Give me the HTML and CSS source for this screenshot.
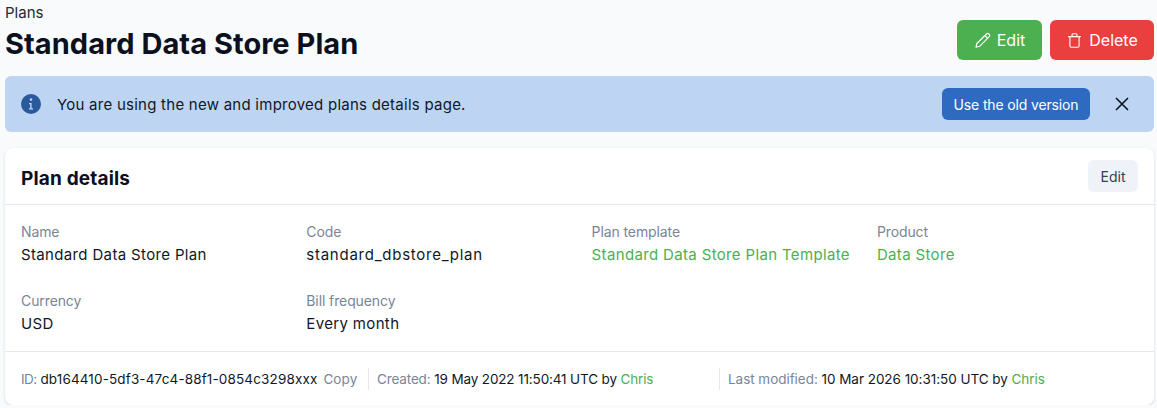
FILE: index.html
```html
<!DOCTYPE html>
<html lang="en">
<head>
<meta charset="utf-8">
<title>Standard Data Store Plan</title>
<link rel="stylesheet" href="styles.css">
</head>
<body>
<div class="page">
  <header class="top">
    <div class="titles">
      <div class="crumb">Plans</div>
      <h1>Standard Data Store Plan</h1>
    </div>
    <div class="actions">
      <button class="btn btn-green">
        <svg class="btn-icon" viewBox="0 0 24 24" fill="none" stroke="currentColor" stroke-width="1.6" stroke-linecap="round" stroke-linejoin="round"><path d="M17.6 2.8a2.7 2.7 0 0 1 3.8 3.8L8 20.2 2.8 21.4 4 16.2Z"/><path d="M15.4 5l3.8 3.8"/></svg>
        Edit
      </button>
      <button class="btn btn-red">
        <svg class="btn-icon" viewBox="0 0 24 24" fill="none" stroke="currentColor" stroke-width="1.6" stroke-linecap="round" stroke-linejoin="round"><path d="M3.5 6.5h17"/><path d="M8.5 6.5V4a1.5 1.5 0 0 1 1.5-1.5h4A1.5 1.5 0 0 1 15.500 4v2.500"/><path d="M5.500 6.500V19.500a2 2 0 0 0 2 2h9a2 2 0 0 0 2-2V6.500"/></svg>
        Delete
      </button>
    </div>
  </header>

  <div class="alert">
    <svg class="alert-icon" viewBox="0 0 20 20"><circle cx="10" cy="10" r="10" fill="#2a5a9c"/><circle cx="10" cy="5.6" r="1.3" fill="#bdd5f2"/><path d="M8 9h2.6v5.2H12v1.2H8v-1.2h1.2v-4H8z" fill="#bdd5f2"/></svg>
    <span class="alert-text">You are using the new and improved plans details page.</span>
    <button class="btn-old">Use the old version</button>
    <svg class="alert-close" viewBox="0 0 14 14" fill="none" stroke="#101828" stroke-width="1.7" stroke-linecap="round"><path d="M1.5 1.5l11 11M12.5 1.5l-11 11"/></svg>
  </div>

  <section class="card">
    <div class="card-head">
      <h2>Plan details</h2>
      <button class="btn-soft">Edit</button>
    </div>
    <div class="fields">
      <div class="field"><div class="label">Name</div><div class="value">Standard Data Store Plan</div></div>
      <div class="field"><div class="label">Code</div><div class="value value-code">standard_dbstore_plan</div></div>
      <div class="field"><div class="label">Plan template</div><div class="value link">Standard Data Store Plan Template</div></div>
      <div class="field"><div class="label">Product</div><div class="value link">Data Store</div></div>
      <div class="field"><div class="label">Currency</div><div class="value">USD</div></div>
      <div class="field"><div class="label">Bill frequency</div><div class="value">Every month</div></div>
    </div>
    <div class="card-foot">
      <div class="meta meta-id"><span class="muted id-label">ID:</span> db164410-5df3-47c4-88f1-0854c3298xxx <span class="muted copy">Copy</span></div>
      <div class="meta meta-created"><span class="muted">Created:</span> 19 May 2022 11:50:41 UTC by <span class="link">Chris</span></div>
      <div class="meta meta-modified"><span class="muted">Last modified:</span> 10 Mar 2026 10:31:50 UTC by <span class="link">Chris</span></div>
    </div>
  </section>
</div>
</body>
</html>
```
FILE: styles.css
```css
* { box-sizing: border-box; }
html, body { margin: 0; padding: 0; }
body {
  background: #f9fafc;
  color: #101828;
  font-family: "Inter", "Noto Sans", sans-serif;
  font-size: 15px;
  overflow: hidden;
}
button { font-family: inherit; border: 0; cursor: pointer; }
.page { padding: 0 3px 0 5px; }
.top { display: flex; justify-content: space-between; align-items: flex-start; height: 76px; }
.crumb { font-size: 15px; line-height: 20px; padding-top: 3px; color: #1d2939; }
h1 { margin: 3px 0 0; font-size: 29px; line-height: 36px; font-weight: 700; letter-spacing: .05px; color: #0a1020; }
.actions { display: flex; gap: 8px; padding-top: 20px; }
.btn {
  display: flex; align-items: center; justify-content: center; gap: 6px;
  height: 40px; border-radius: 6px; color: #fff; font-size: 16px; padding: 0 16px;
}
.btn-green { background: #4caf50; width: 85px; }
.btn-red { background: #ea3f3f; width: 104px; }
.btn-icon { width: 17px; height: 17px; flex: none; }
.alert {
  display: flex; align-items: center; height: 56px; background: #bdd5f2;
  border-radius: 6px; padding: 0 25px 0 16px;
}
.alert-icon { width: 20px; height: 20px; flex: none; }
.alert-text { margin-left: 16px; flex: 1; font-size: 15px; letter-spacing: .25px; }
.btn-old { height: 32px; width: 148px; padding: 0; border-radius: 6px; background: #2e6abf; color: #fff; font-size: 14px; letter-spacing: -.15px; }
.alert-close { width: 14px; height: 14px; margin-left: 25px; flex: none; }
.card {
  margin-top: 16px; height: 257px; background: #fff; border-radius: 8px;
  box-shadow: 0 1px 3px rgba(16, 24, 40, .14);
}
.card-head {
  display: flex; justify-content: space-between; align-items: center;
  height: 57px; padding: 0 16px; border-bottom: 1px solid #e4e8ef;
}
h2 { margin: 4px 0 0; font-size: 19px; font-weight: 700; letter-spacing: .17px; color: #0a1020; }
.btn-soft { height: 32px; width: 50px; border-radius: 6px; background: #eff2f7; color: #344054; font-size: 14px; }
.fields {
  display: grid; grid-template-columns: repeat(4, 285.3px); grid-auto-rows: 69px;
  height: 146px; padding: 16px 16px 0;
}
.label { font-size: 14px; line-height: 22px; letter-spacing: -.1px; color: #7a8599; }
.value { font-size: 15px; line-height: 22px; margin-top: 1px; letter-spacing: .35px; }
.value-code { letter-spacing: .75px; }
.link { color: #4caf50; }
.card-foot {
  display: flex; align-items: center; height: 54px; padding: 0 16px;
  border-top: 1px solid #e4e8ef; font-size: 13.5px; letter-spacing: -.1px;
}
.muted { color: #7a8599; }
.meta { white-space: nowrap; height: 22px; line-height: 22px; }
.meta-id { width: 348px; border-right: 1px solid #e4e8ef; letter-spacing: .14px; }
.id-label { letter-spacing: -.6px; }
.copy { margin-left: 2px; letter-spacing: .1px; }
.meta-created { width: 350px; padding-left: 8px; letter-spacing: -.14px; }
.meta-modified { padding-left: 8px; border-left: 1px solid #e4e8ef; letter-spacing: -.04px; }
```
